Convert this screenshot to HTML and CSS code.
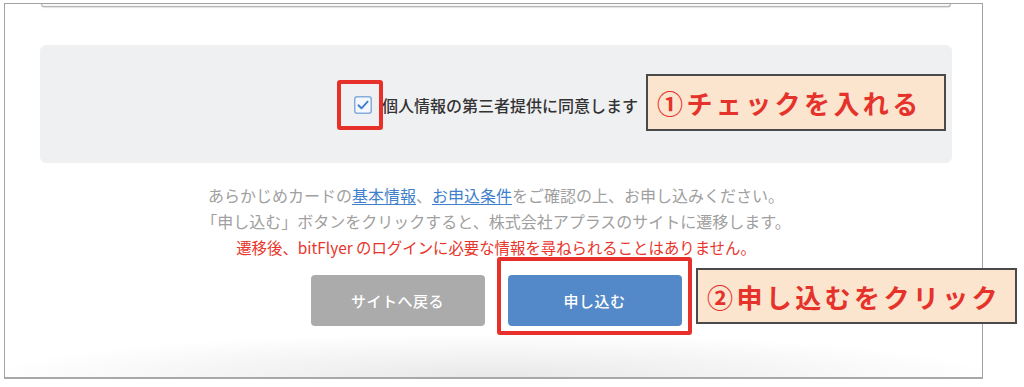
FILE: index.html
```html
<!DOCTYPE html>
<html lang="ja">
<head>
<meta charset="utf-8">
<title>お申し込み</title>
<link rel="stylesheet" href="styles.css">
</head>
<body>
<div class="frame">
  <div class="prev-card"></div>
  <section class="consent-panel">
    <label class="consent">
      <span class="checkbox">
        <svg width="18" height="18" viewBox="0 0 18 18" aria-hidden="true">
          <rect x="0.75" y="0.75" width="16.5" height="16.5" rx="2.5" fill="#f4f8fd" stroke="#86acdc" stroke-width="1.5"/>
          <path d="M4.4 9.3 L7.5 12.3 L13.6 5.6" fill="none" stroke="#3f7fcf" stroke-width="1.9" stroke-linecap="round" stroke-linejoin="round"/>
        </svg>
      </span>
      <span class="consent-text">個人情報の第三者提供に同意します</span>
    </label>
  </section>
  <div class="notes">
    <p>あらかじめカードの<a href="#">基本情報</a>、<a href="#">お申込条件</a>をご確認の上、お申し込みください。</p>
    <p>「申し込む」ボタンをクリックすると、株式会社アプラスのサイトに遷移します。</p>
    <p class="warn">遷移後、bitFlyer のログインに必要な情報を尋ねられることはありません。</p>
  </div>
  <div class="actions">
    <button class="btn btn-back" type="button">サイトへ戻る</button>
    <button class="btn btn-apply" type="button">申し込む</button>
  </div>
  <div class="highlight highlight-check"></div>
  <div class="highlight highlight-apply"></div>
  <div class="callout callout-check">①チェックを入れる</div>
  <div class="callout callout-apply">②申し込むをクリック</div>
</div>
</body>
</html>
```
FILE: styles.css
```css
html, body {
  margin: 0;
  padding: 0;
  background: #ffffff;
}

body {
  font-family: "Noto Sans CJK JP", "Noto Sans", sans-serif;
  color: #333333;
}

.frame {
  position: relative;
  box-sizing: border-box;
  margin: 3px 0 0 4px;
  width: 979px;
  height: 376px;
  padding: 0 30px 0 35px;
  border: 1px solid #a2a2a2;
  border-bottom: 2px solid #a8a8a8;
}

.frame::after {
  content: "";
  position: absolute;
  left: 0;
  right: 0;
  bottom: 0;
  height: 44px;
  background: radial-gradient(ellipse 52% 100% at 50% 100%, rgba(0, 0, 0, 0.09), rgba(0, 0, 0, 0) 100%);
  pointer-events: none;
}

.prev-card {
  height: 2px;
  margin: 0 1px;
  background: #f6f6f6;
  border: 1px solid #b5b5b5;
  border-top: 0;
  border-radius: 0 0 4px 4px;
  box-shadow: 0 1px 1px rgba(0, 0, 0, 0.12);
}

.consent-panel {
  margin-top: 38px;
  height: 118px;
  background: #eff0f2;
  border-radius: 6px;
  display: flex;
  align-items: center;
  justify-content: center;
}

.consent {
  display: flex;
  align-items: center;
  gap: 10px;
  padding-top: 2px;
}

.checkbox {
  display: flex;
  width: 18px;
  height: 18px;
}

.consent-text {
  font-size: 16px;
  font-weight: 500;
  line-height: 24px;
  color: #333333;
}

.notes {
  margin-top: 19px;
  text-align: center;
}

.notes p {
  margin: 0;
  font-size: 16px;
  line-height: 26px;
  color: #a0a0a0;
}

.notes a {
  color: #3f7fcb;
  text-decoration: underline;
  text-underline-offset: 2px;
}

.notes .warn {
  color: #e8352b;
  font-size: 15.4px;
}

.actions {
  margin-top: 15px;
  display: flex;
  justify-content: center;
  gap: 23px;
}

.btn {
  width: 174px;
  height: 51px;
  border: 0;
  border-radius: 4px;
  font-family: inherit;
  font-size: 15px;
  font-weight: 500;
  color: #ffffff;
  letter-spacing: 0.5px;
}

.btn-back {
  background: #ababab;
}

.btn-apply {
  background: #5389c8;
}

.highlight {
  position: absolute;
  box-sizing: border-box;
  border: 4px solid #e8302a;
  border-radius: 3px;
}

.highlight-check {
  left: 332px;
  top: 76px;
  width: 46px;
  height: 50px;
}

.highlight-apply {
  left: 492px;
  top: 253px;
  width: 195px;
  height: 78px;
}

.callout {
  position: absolute;
  box-sizing: border-box;
  display: flex;
  align-items: center;
  padding-left: 9px;
  background: #fce5cf;
  border: 2px solid #4a4a4a;
  color: #e5322a;
  font-size: 26px;
  font-weight: 700;
  letter-spacing: 3.4px;
  white-space: nowrap;
}

.callout-check {
  left: 641px;
  top: 70px;
  width: 300px;
  height: 57px;
}

.callout-apply {
  left: 691px;
  top: 264px;
  width: 321px;
  height: 56px;
}
```
